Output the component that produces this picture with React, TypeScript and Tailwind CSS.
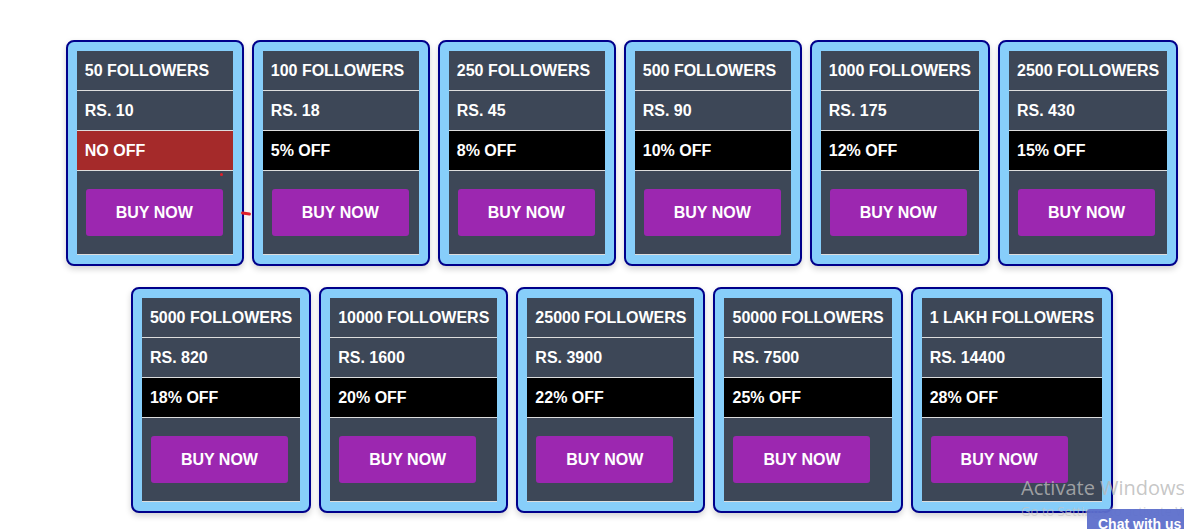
const plans = [
  { qty: '50 FOLLOWERS', price: 'RS. 10', off: 'NO OFF' },
  { qty: '100 FOLLOWERS', price: 'RS. 18', off: '5% OFF' },
  { qty: '250 FOLLOWERS', price: 'RS. 45', off: '8% OFF' },
  { qty: '500 FOLLOWERS', price: 'RS. 90', off: '10% OFF' },
  { qty: '1000 FOLLOWERS', price: 'RS. 175', off: '12% OFF' },
  { qty: '2500 FOLLOWERS', price: 'RS. 430', off: '15% OFF' },
  { qty: '5000 FOLLOWERS', price: 'RS. 820', off: '18% OFF' },
  { qty: '10000 FOLLOWERS', price: 'RS. 1600', off: '20% OFF' },
  { qty: '25000 FOLLOWERS', price: 'RS. 3900', off: '22% OFF' },
  { qty: '50000 FOLLOWERS', price: 'RS. 7500', off: '25% OFF' },
  { qty: '1 LAKH FOLLOWERS', price: 'RS. 14400', off: '28% OFF' },
];

type Plan = (typeof plans)[number];

export default function App() {
  return (
    <div
      className="relative w-[1184px] h-[529px] overflow-hidden bg-white"
      style={{ fontFamily: '"Liberation Sans", Arial, sans-serif' }}
    >
      <div className="flex flex-col gap-y-[21px] pt-[40px] pl-[60px]">
        <div className="flex justify-center gap-x-[8px]">
          {plans.slice(0, 6).map(p => <PlanCard key={p.qty} plan={p} />)}
        </div>
        <div className="flex justify-center gap-x-[8px]">
          {plans.slice(6).map(p => <PlanCard key={p.qty} plan={p} />)}
        </div>
      </div>

      {/* stray marks from the screenshot */}
      <div className="absolute left-[220px] top-[173px] w-[3px] h-[3px] rounded-full bg-[#e0202a]" />
      <div className="absolute left-[241px] top-[212px] w-[10px] h-[3px] rounded-full bg-[#e0202a] rotate-[8deg]" />

      {/* windows watermark */}
      <div
        className="absolute left-[1021px] top-[476px] text-[20px] leading-[24px] text-[#b8b8b8]/80 whitespace-nowrap"
        style={{ fontFamily: '"Open Sans", "Noto Sans", sans-serif' }}
      >
        Activate Windows
      </div>
      <div
        className="absolute left-[1021px] top-[503px] text-[13px] leading-[16px] text-[#c4c4c4]/70 whitespace-nowrap"
        style={{ fontFamily: '"Open Sans", "Noto Sans", sans-serif' }}
      >
        Go to Settings to activate Windows.
      </div>

      {/* chat tab */}
      <div className="absolute left-[1087px] top-[509px] w-[110px] h-[30px] bg-[#5d6fcb]/95 rounded-tl-[3px] pl-[11px] pt-[7px] text-[14px] leading-[16px] font-bold text-white whitespace-nowrap">
        Chat with us
      </div>
    </div>
  );
}

function PlanCard({ plan }: { plan: Plan }) {
  const noOff = plan.off === 'NO OFF';
  return (
    <div className="border-2 border-[#00008b] rounded-[8px] bg-[#87cefa] p-[9px] shadow-[0_3px_6px_rgba(0,0,0,0.18)]">
      <div className="bg-[#3d4757] text-white font-bold text-[16px] leading-[18px] whitespace-nowrap">
        <div className="h-[40px] px-[8px] flex items-center border-b border-[#dddddd]">{plan.qty}</div>
        <div className="h-[40px] px-[8px] flex items-center border-b border-[#dddddd]">{plan.price}</div>
        <div className={`h-[40px] px-[8px] flex items-center border-b border-[#dddddd] ${noOff ? 'bg-[#a52a2a]' : 'bg-black'}`}>
          {plan.off}
        </div>
        <div className="h-[84px] pl-[9px] pr-[10px] pt-[18px] border-b border-[#dddddd]">
          <button className="w-[137px] h-[47px] rounded-[3px] bg-[#9c27b0] text-white font-bold text-[16px]">
            BUY NOW
          </button>
        </div>
      </div>
    </div>
  );
}
